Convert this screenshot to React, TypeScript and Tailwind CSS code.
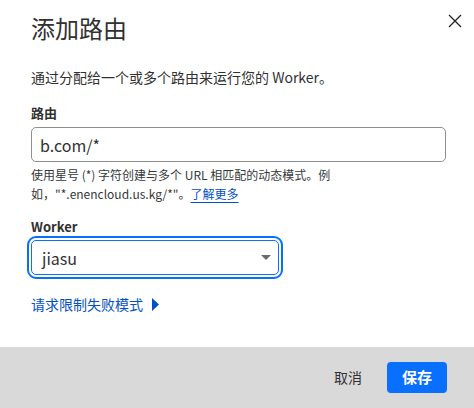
import { useState } from "react";

const font = { fontFamily: '"Noto Sans CJK SC", "Noto Sans", sans-serif' };

export default function App() {
  const [route, setRoute] = useState("b.com/*");

  return (
    <div
      className="w-[474px] h-[408px] bg-white flex flex-col text-[#313131] overflow-hidden"
      style={font}
    >
      {/* Header */}
      <div className="flex items-start justify-between pl-[31px] pr-[12px] pt-3">
        <h1 className="text-[24px] leading-8 font-normal text-[#313131]">添加路由</h1>
        <button className="mt-[2px] text-[#222]" aria-label="关闭">
          <svg width="14" height="14" viewBox="0 0 14 14" fill="none">
            <path d="M1 1 L13 13 M13 1 L1 13" stroke="currentColor" strokeWidth="1.3" />
          </svg>
        </button>
      </div>

      {/* Body */}
      <div className="flex-1 flex flex-col pl-[31px] pr-[28px]">
        <p className="mt-[23px] text-[14px] leading-5">
          通过分配给一个或多个路由来运行您的 Worker。
        </p>

        <label className="mt-[17px] text-[13px] leading-[18px] font-bold">路由</label>
        <input
          value={route}
          onChange={(e) => setRoute(e.target.value)}
          className="mt-[5px] h-[35px] w-[415px] rounded-[5px] border border-[#8e8e8e] px-[8px] text-[16px] text-[#313131] outline-none"
          style={font}
        />
        <p className="mt-[3px] w-[360px] text-[12px] leading-[19px] text-[#36393a]">
          使用星号 (*) 字符创建与多个 URL 相匹配的动态模式。例
          <br />
          如，"*.enencloud.us.kg/*"。
          <a href="#" className="text-[#0051c3] underline underline-offset-[3px]">了解更多</a>
        </p>

        <label className="mt-[15px] text-[13px] leading-[18px] font-bold">Worker</label>
        <div className="mt-[4px] relative w-[248px] h-[35px] rounded-[5px] border border-[#086fff] outline-2 outline-solid outline-[#086fff] outline-offset-2 flex items-center pl-[10px]">
          <span className="text-[16px] text-[#313131]">jiasu</span>
          <svg
            className="absolute right-[7px] top-[14px]"
            width="10"
            height="5"
            viewBox="0 0 10 5"
          >
            <path d="M0 0 H10 L5 5 Z" fill="#6b6b6b" />
          </svg>
        </div>

        <button className="mt-[19px] self-start flex items-center gap-[9px] text-[14px] leading-5 text-[#0051c3]">
          请求限制失败模式
          <svg width="7" height="13" viewBox="0 0 7 13">
            <path d="M0 0 L7 6.5 L0 13 Z" fill="#0051c3" />
          </svg>
        </button>
      </div>

      {/* Footer */}
      <div className="h-[61px] bg-[#d9d9d9] flex items-center justify-end pr-[27px] gap-[13px]">
        <button className="px-3 text-[14px] text-[#313131]">取消</button>
        <button className="w-[60px] h-[31px] rounded-[4px] bg-[#086fff] text-white text-[15px] font-semibold">
          保存
        </button>
      </div>
    </div>
  );
}
